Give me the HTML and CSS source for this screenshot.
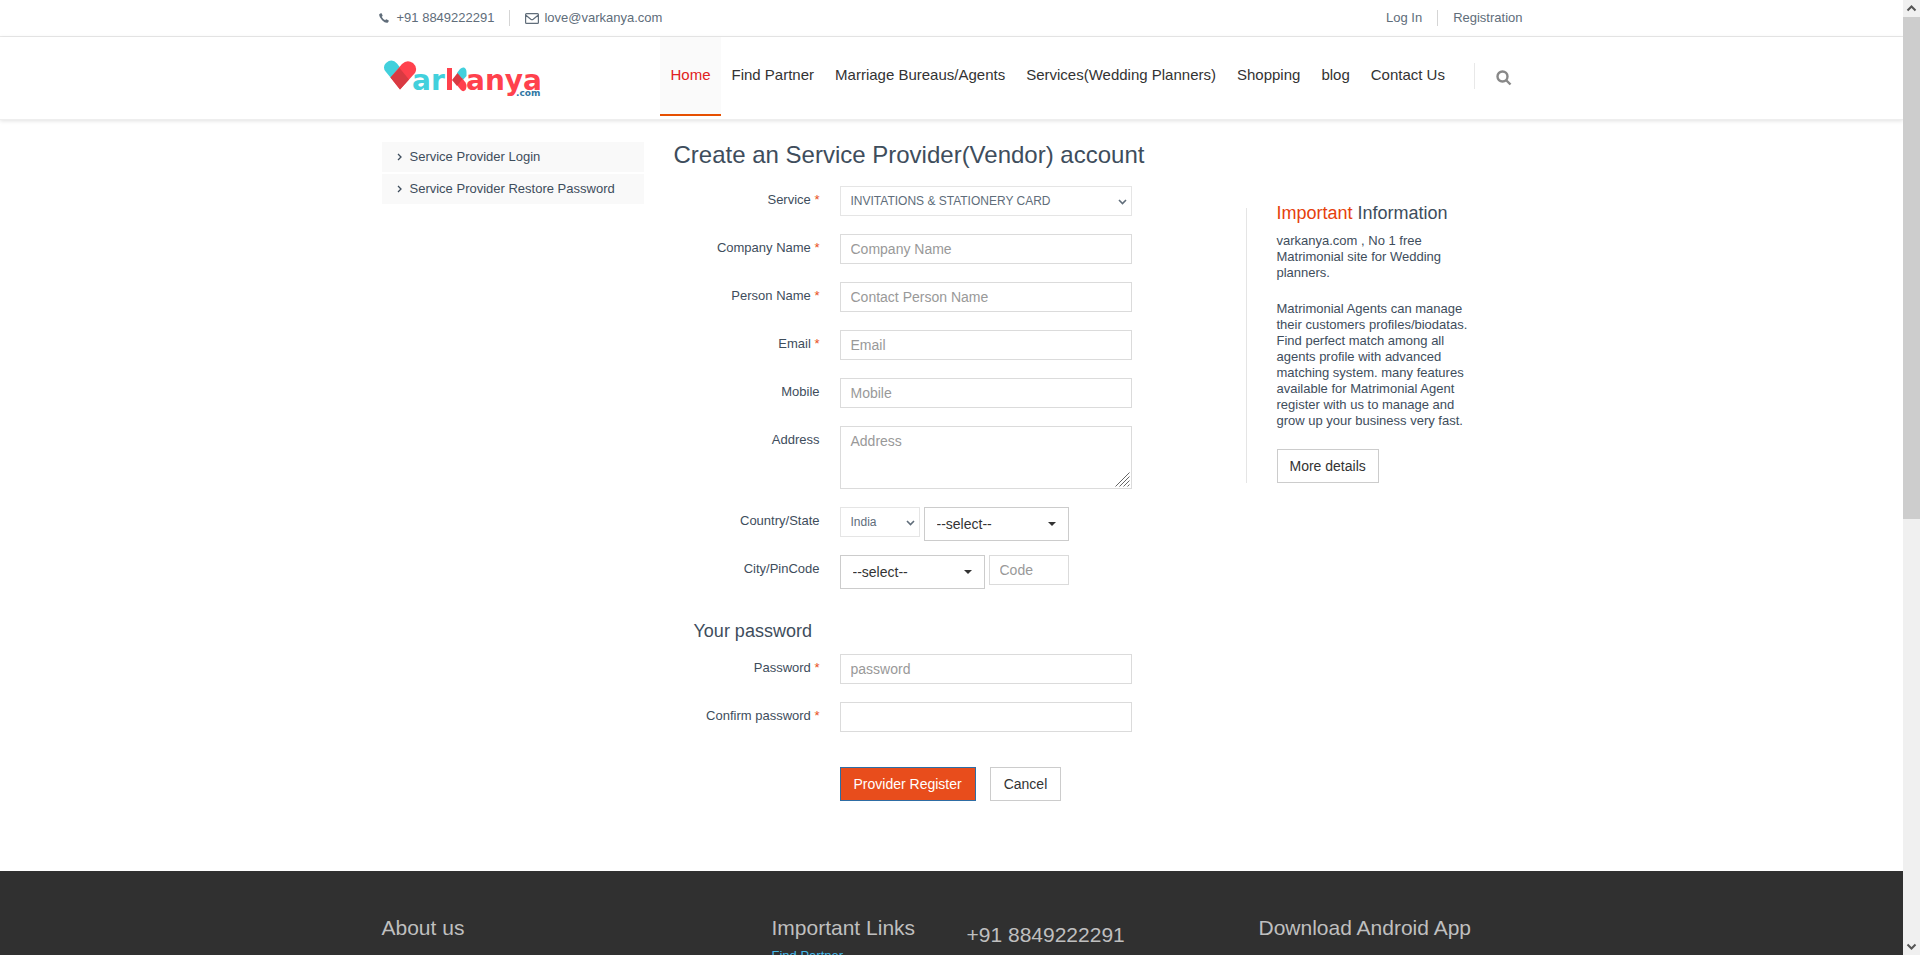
FILE: index.html
```html
<!DOCTYPE html>
<html lang="en">
	<head>
		<meta charset="UTF-8">
		<meta name="viewport" content="width=device-width, initial-scale=1.0">
		<title>Varkanya - Service Provider Registration</title>
		<link rel="stylesheet" href="styles.css">
	</head>
	<body>
		<!-- top bar -->
		<div class="pre-header">
			<div class="container pre-header-row">
				<ul class="contact-list">
					<li>
						<svg class="icon-phone" width="10" height="10" viewBox="0 0 10 10"><path d="M0.3 1.2 Q1.3 0 2.6 0.2 L3.7 2.7 Q3.5 3.3 2.7 3.8 Q3.9 6.2 6.2 7.3 Q6.8 6.3 7.4 6.2 L9.8 7.5 Q9.8 9 8.6 9.7 Q6.3 10.4 3.1 7.2 Q-0.5 3.4 0.3 1.2 Z"/></svg>
						<span>+91 8849222291</span>
					</li>
					<li>
						<svg class="icon-mail" width="14" height="11" viewBox="0 0 14 11"><path d="M1.5 0.6 h11 q0.9 0 0.9 0.9 v8 q0 0.9 -0.9 0.9 h-11 q-0.9 0 -0.9 -0.9 v-8 q0 -0.9 0.9 -0.9 Z M0.6 2 L5.8 6.2 Q7 7.1 8.2 6.2 L13.4 2"/></svg>
						<span>love@varkanya.com</span>
					</li>
				</ul>
				<ul class="user-list">
					<li><a href="#">Log In</a></li>
					<li><a href="#">Registration</a></li>
				</ul>
			</div>
		</div>

		<!-- header -->
		<header class="header">
			<div class="container header-row">
				<a class="logo" href="#" aria-label="varkanya.com">
					<svg width="164" height="40" viewBox="0 0 164 40">
						<path class="logo-cyan" d="M8.5 17.5 L4 12 A6 6 0 0 1 4 3 Q10 -2 15 3.5 L20 10 L13 22 Z"/>
						<path class="logo-red" d="M8.5 17.5 L20 4 Q25 -1 31 3 Q36 7.5 33 13 L18 29.5 Z"/>
						<path class="logo-dark" d="M8.5 17.5 L17.5 8 L27 19.5 L18 29.5 Z"/>
						<text class="logo-cyan logo-word" x="30" y="30">ar</text>
						<rect class="logo-red" x="65" y="8" width="5" height="22"/>
						<path class="logo-cyan" d="M75 13 L78 9 Q80 7 82 7.5 Q84.5 8.5 84.5 12 V16 L80 21 Z"/>
						<path class="logo-red" d="M80 18 L83.5 22.5 Q85.5 26 83.5 30 Q81 32.5 78.5 29.5 L74 24 Z"/>
						<path class="logo-dark" d="M70 20 L75.5 13 L80.5 19 L75 26 Z"/>
						<text class="logo-red logo-word" x="84" y="30">anya</text>
						<text class="logo-com" x="134" y="36">.com</text>
					</svg>
				</a>
				<nav class="nav">
					<a class="active" href="#">Home</a>
					<a href="#">Find Partner</a>
					<a href="#">Marriage Bureaus/Agents</a>
					<a href="#">Services(Wedding Planners)</a>
					<a href="#">Shopping</a>
					<a href="#">blog</a>
					<a href="#">Contact Us</a>
					<button class="search" type="button" aria-label="Search">
						<svg width="16" height="16" viewBox="0 0 16 16"><circle cx="6.5" cy="6.5" r="5"/><path d="M10.5 10.5 L14.5 14.5"/></svg>
					</button>
				</nav>
			</div>
		</header>

		<!-- main content -->
		<main class="container main">
			<ul class="sidebar">
				<li><a href="#"><svg width="5" height="8" viewBox="0 0 5 8"><path d="M1 1 L4 4 L1 7"/></svg>Service Provider Login</a></li>
				<li><a href="#"><svg width="5" height="8" viewBox="0 0 5 8"><path d="M1 1 L4 4 L1 7"/></svg>Service Provider Restore Password</a></li>
			</ul>

			<section class="content">
				<h1>Create an Service Provider(Vendor) account</h1>
				<div class="content-row">
					<form class="form">
						<div class="form-group">
							<label for="service">Service <span class="require">*</span></label>
							<div class="select-box">
								<select id="service" class="form-control">
									<option>INVITATIONS &amp; STATIONERY CARD</option>
								</select>
								<svg class="chevron" width="9" height="6" viewBox="0 0 9 6"><path d="M1 1 L4.5 4.5 L8 1"/></svg>
							</div>
						</div>
						<div class="form-group">
							<label for="company">Company Name <span class="require">*</span></label>
							<input id="company" class="form-control" type="text" placeholder="Company Name">
						</div>
						<div class="form-group">
							<label for="person">Person Name <span class="require">*</span></label>
							<input id="person" class="form-control" type="text" placeholder="Contact Person Name">
						</div>
						<div class="form-group">
							<label for="email">Email <span class="require">*</span></label>
							<input id="email" class="form-control" type="email" placeholder="Email">
						</div>
						<div class="form-group">
							<label for="mobile">Mobile</label>
							<input id="mobile" class="form-control" type="text" placeholder="Mobile">
						</div>
						<div class="form-group">
							<label for="address">Address</label>
							<div class="area-box">
								<textarea id="address" class="form-control" placeholder="Address"></textarea>
								<svg class="grip" width="15" height="15" viewBox="0 0 15 15"><path d="M0.5 14.5 L14.5 0.5 M4.5 14.5 L14.5 4.5 M8.5 14.5 L14.5 8.5 M12.5 14.5 L14.5 12.5"/></svg>
							</div>
						</div>
						<div class="form-group form-group-pair">
							<label for="country">Country/State</label>
							<div class="pair">
								<div class="select-box short">
									<select id="country" class="form-control">
										<option>India</option>
									</select>
									<svg class="chevron" width="9" height="6" viewBox="0 0 9 6"><path d="M1 1 L4.5 4.5 L8 1"/></svg>
								</div>
								<div class="select-box wide">
									<select class="picker" aria-label="State">
										<option>--select--</option>
									</select>
									<svg class="caret" width="8" height="4" viewBox="0 0 8 4"><path d="M0 0 H8 L4 4 Z"/></svg>
								</div>
							</div>
						</div>
						<div class="form-group form-group-pair">
							<label for="city">City/PinCode</label>
							<div class="pair">
								<div class="select-box wide">
									<select id="city" class="picker">
										<option>--select--</option>
									</select>
									<svg class="caret" width="8" height="4" viewBox="0 0 8 4"><path d="M0 0 H8 L4 4 Z"/></svg>
								</div>
								<input class="form-control short" type="text" placeholder="Code" aria-label="PinCode">
							</div>
						</div>

						<h2 class="legend">Your password</h2>
						<div class="form-group">
							<label for="password">Password <span class="require">*</span></label>
							<input id="password" class="form-control" type="password" placeholder="password">
						</div>
						<div class="form-group">
							<label for="confirm">Confirm password <span class="require">*</span></label>
							<input id="confirm" class="form-control" type="password">
						</div>
						<div class="form-actions">
							<button class="btn btn-primary" type="submit">Provider Register</button>
							<button class="btn" type="button">Cancel</button>
						</div>
					</form>

					<aside class="info">
						<h2><em>Important</em> Information</h2>
						<p>varkanya.com , No 1 free Matrimonial site for Wedding planners.</p>
						<p>Matrimonial Agents can manage their customers profiles/biodatas. Find perfect match among all agents profile with advanced matching system. many features available for Matrimonial Agent register with us to manage and grow up your business very fast.</p>
						<button class="btn" type="button">More details</button>
					</aside>
				</div>
			</section>
		</main>

		<!-- footer -->
		<footer class="pre-footer">
			<div class="container footer-row">
				<div>
					<h2>About us</h2>
				</div>
				<div>
					<h2>Important Links</h2>
					<a href="#">Find Partner</a>
				</div>
				<div class="footer-phone">
					<h2>+91 8849222291</h2>
				</div>
				<div>
					<h2>Download Android App</h2>
				</div>
			</div>
		</footer>

		<!-- window scroll bar -->
		<div class="scrollbar" aria-hidden="true">
			<svg width="17" height="17" viewBox="0 0 17 17"><path d="M4.5 10.5 L8.5 6.5 L12.5 10.5"/></svg>
			<div class="scrollbar-track">
				<div class="scrollbar-thumb"></div>
			</div>
			<svg width="17" height="17" viewBox="0 0 17 17"><path d="M4.5 6.5 L8.5 10.5 L12.5 6.5"/></svg>
		</div>
	</body>
</html>
```
FILE: styles.css
```css
* {
	box-sizing: border-box;
}

html,
body {
	height: 100%;
}

body {
	margin: 0;
	padding-right: 17px;
	overflow: hidden;
	background: #fff;
	color: #3e4d5c;
	font-family: "Liberation Sans", Arial, sans-serif;
	font-size: 13px;
	line-height: 18px;
}

ul {
	margin: 0;
	padding: 0;
	list-style: none;
}

a {
	color: inherit;
	text-decoration: none;
}

h1,
h2 {
	margin: 0;
	font-weight: normal;
}

svg {
	display: block;
	fill: none;
}

.container {
	max-width: 1170px;
	margin: 0 auto;
	padding: 0 15px;
}

/* top bar */
.pre-header {
	border-bottom: 1px solid #eaeaea;
	color: #606d7a;
}

.pre-header-row {
	display: flex;
	justify-content: space-between;
	height: 36px;
	padding: 0 14px 0 12px;
	align-items: center;
}

.contact-list,
.user-list {
	display: flex;
}

.contact-list li,
.user-list li {
	display: flex;
	align-items: center;
	height: 16px;
	gap: 5px;
}

.contact-list li:first-child {
	gap: 8px;
}

.contact-list li + li,
.user-list li + li {
	margin-left: 15px;
	padding-left: 15px;
	border-left: 1px solid #d5d5d5;
}

.icon-phone {
	fill: #606d7a;
}

.icon-mail {
	stroke: #606d7a;
	stroke-width: 1.2;
}

/* header */
.header {
	border-bottom: 1px solid #eee;
	box-shadow: 0 1px 4px rgba(0, 0, 0, 0.12);
}

.header-row {
	display: flex;
	height: 82px;
}

.logo {
	flex: 0 0 278px;
	padding-top: 23px;
}

.logo-word {
	font: bold 28px "DejaVu Sans", sans-serif;
}

.logo-com {
	fill: #2f77a3;
	font: bold 9px "DejaVu Sans", sans-serif;
}

.logo-cyan {
	fill: #42d0dc;
}

.logo-red {
	fill: #ff414d;
}

.logo-dark {
	fill: #d93a42;
}

.nav {
	display: flex;
	align-items: flex-start;
}

.nav a {
	height: 79px;
	padding: 29px 10px 0 11px;
	color: #333;
	font-size: 15px;
	white-space: nowrap;
}

.nav .active {
	border-bottom: 2px solid #e64f00;
	background: #fafafa;
	color: #e02222;
}

.search {
	height: 26px;
	margin: 26px 0 0 19px;
	padding: 4px 0 0 21px;
	border: 0;
	border-left: 1px solid #e8e8e8;
	background: none;
}

.search svg {
	stroke: #888;
	stroke-width: 2.4;
}

/* main content */
.main {
	display: grid;
	grid-template-columns: 262px 1fr;
	gap: 30px;
	padding-top: 22px;
	padding-bottom: 70px;
}

.sidebar li {
	margin-bottom: 2px;
	background: #f9f9f9;
}

.sidebar a {
	display: flex;
	align-items: center;
	height: 30px;
	padding: 0 15px;
	gap: 8px;
}

.sidebar svg {
	stroke: #3e4d5c;
	stroke-width: 1.3;
}

h1 {
	font-size: 24px;
	line-height: 26px;
}

.content-row {
	display: flex;
	justify-content: space-between;
	align-items: flex-start;
	padding-top: 18px;
}

/* form */
.form {
	width: 458px;
}

.form-group {
	display: grid;
	grid-template-columns: 146px 1fr;
	gap: 20px;
	margin-bottom: 18px;
}

.form-group-pair {
	margin-bottom: 14px;
}

.form-group label {
	padding-top: 5px;
	text-align: right;
}

.require {
	color: #e84d1c;
}

.form-control {
	display: block;
	width: 100%;
	height: 30px;
	padding: 0 10px;
	border: 1px solid #dbdbdb;
	border-radius: 0;
	background: #fff;
	color: #606d7a;
	font: 14px "Liberation Sans", Arial, sans-serif;
}

.form-control::placeholder {
	color: #999;
}

select {
	appearance: none;
}

select.form-control {
	border-color: #e5e5e5;
	font-size: 12px;
}

textarea.form-control {
	height: 63px;
	padding: 6px 10px;
	resize: none;
}

.select-box,
.area-box {
	position: relative;
}

.chevron {
	position: absolute;
	top: 13px;
	right: 5px;
	stroke: #606d7a;
	stroke-width: 1.6;
}

.grip {
	position: absolute;
	right: 2px;
	bottom: 2px;
	stroke: #666;
}

.pair {
	display: flex;
	align-items: flex-start;
	gap: 4px;
}

.short {
	width: 80px;
}

.wide {
	width: 145px;
}

.picker {
	display: block;
	width: 100%;
	height: 34px;
	padding: 0 12px;
	border: 1px solid #ccc;
	border-radius: 0;
	background: #fff;
	color: #333;
	font: 14px "Liberation Sans", Arial, sans-serif;
}

.caret {
	position: absolute;
	top: 15px;
	right: 13px;
	fill: #333;
}

.legend {
	padding: 18px 0 13px 20px;
	font-size: 18px;
	line-height: 20px;
}

.form-actions {
	display: flex;
	gap: 14px;
	padding: 17px 0 0 166px;
}

.btn {
	height: 34px;
	padding: 0 12px;
	border: 1px solid #ccc;
	background: #fff;
	color: #333;
	font: 14px "Liberation Sans", Arial, sans-serif;
}

.form-actions .btn {
	padding: 0 13px;
}

.form-actions .btn-primary {
	border-color: #2e6da4;
	background: #e84d1c;
	color: #fff;
}

/* information box */
.info {
	width: 276px;
	margin-top: 22px;
	padding: 0 45px 0 30px;
	border-left: 1px solid #e5e5e5;
}

.info h2 {
	margin-bottom: 15px;
	font-size: 18px;
	line-height: 10px;
}

.info em {
	color: #e6400c;
	font-style: normal;
}

.info p {
	margin: 0 0 20px;
	line-height: 16px;
}

/* footer */
.pre-footer {
	min-height: 84px;
	background: #303030;
	color: #bfbfbf;
}

.footer-row {
	display: grid;
	grid-template-columns: 360px 165px 262px 1fr;
	gap: 30px;
	padding-top: 45px;
}

.footer-row h2 {
	font-size: 21px;
	line-height: 24px;
	white-space: nowrap;
}

.footer-row a {
	display: block;
	padding-top: 7px;
	color: #45b8e8;
}

.footer-phone {
	padding-top: 7px;
}

/* scroll bar on the right edge of the window */
.scrollbar {
	position: fixed;
	top: 0;
	right: 0;
	bottom: 0;
	display: flex;
	flex-direction: column;
	width: 17px;
	background: #f0f0f0;
}

.scrollbar svg {
	stroke: #555;
	stroke-width: 2;
}

.scrollbar-track {
	flex: 1;
}

.scrollbar-thumb {
	height: 54.5%;
	background: #cdcdcd;
}
```
